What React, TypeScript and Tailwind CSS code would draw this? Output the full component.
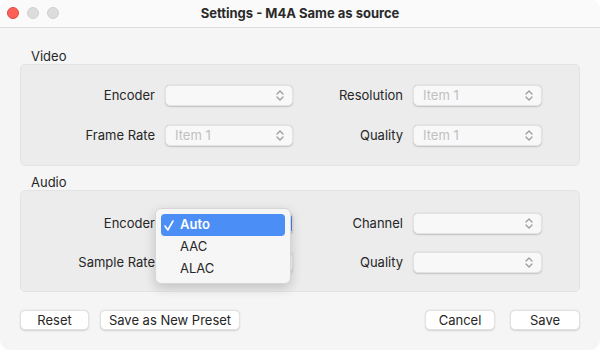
import React from "react";

const Chevrons = () => (
  <svg width="8" height="11" viewBox="0 0 8 11" fill="none" stroke="#9a9a9a" strokeWidth="1.2" strokeLinecap="round" strokeLinejoin="round">
    <path d="M1 4 L4 1 L7 4" />
    <path d="M1 7 L4 10 L7 7" />
  </svg>
);

const Popup = ({ text, w, blue }: { text?: string; w: string; blue?: boolean }) => (
  <div
    className={`${w} h-[21px] rounded-[5px] flex items-center justify-between pl-[9px] pr-[8px] shadow-[0_0.5px_1.5px_rgba(0,0,0,0.18)] border border-[#e2e2e2] ${
      blue ? "bg-[#3b7ff0]" : "bg-[#f8f8f8]"
    }`}
  >
    <span className="text-[13px] text-[#c0c0c0] leading-none">{text ?? ""}</span>
    <Chevrons />
  </div>
);

const Row = ({
  l1,
  l2,
  p1,
  p2,
  children,
}: {
  l1: string;
  l2: string;
  p1: React.ReactNode;
  p2: React.ReactNode;
  children?: React.ReactNode;
}) => (
  <div className="flex items-center h-[21px]">
    <div className="w-[134px] text-right text-[13px] text-[#262626]">{l1}</div>
    <div className="ml-[10px] relative">
      {p1}
      {children}
    </div>
    <div className="w-[110px] text-right text-[13px] text-[#262626]">{l2}</div>
    <div className="ml-[10px]">{p2}</div>
  </div>
);

export default function App() {
  return (
    <div
      className="w-[600px] h-[350px] bg-[#f5f5f5] flex flex-col overflow-hidden rounded-[10px]"
      style={{ fontFamily: "Inter, 'Noto Sans', sans-serif" }}
    >
      <div className="h-[28px] shrink-0 bg-[#fafafa] border-b border-[#dedede] relative flex items-center justify-center">
        <div className="absolute left-[7px] top-[7px] flex gap-[8px]">
          <div className="w-[12px] h-[12px] rounded-full bg-[#fe5f57] border border-[#e14942]" />
          <div className="w-[12px] h-[12px] rounded-full bg-[#dcdcdc] border border-[#d0d0d0]" />
          <div className="w-[12px] h-[12px] rounded-full bg-[#dcdcdc] border border-[#d0d0d0]" />
        </div>
        <span className="text-[13px] font-bold text-[#2a2a2a]">Settings - M4A Same as source</span>
      </div>

      <div className="flex flex-col px-[20px] pt-[20px]">
        <div className="h-[16px] pl-[11px] text-[13px] leading-[16px] text-[#262626]">Video</div>
        <div className="h-[102px] rounded-[5px] bg-[#ececec] border border-[#e4e4e4] pt-[20px] flex flex-col gap-[19px]">
          <Row l1="Encoder" l2="Resolution" p1={<Popup w="w-[128px]" />} p2={<Popup w="w-[129px]" text="Item 1" />} />
          <Row l1="Frame Rate" l2="Quality" p1={<Popup w="w-[128px]" text="Item 1" />} p2={<Popup w="w-[129px]" text="Item 1" />} />
        </div>

        <div className="h-[16px] mt-[8px] pl-[11px] text-[13px] leading-[16px] text-[#262626]">Audio</div>
        <div className="h-[102px] rounded-[5px] bg-[#ececec] border border-[#e4e4e4] pt-[22px] flex flex-col gap-[18px]">
          <Row l1="Encoder" l2="Channel" p1={<Popup w="w-[128px]" blue />} p2={<Popup w="w-[129px]" />}>
            <div className="absolute left-[-10px] top-[-5px] w-[136px] h-[76px] rounded-[6px] bg-[#f6f6f6] border border-[#d6d6d6] shadow-[0_4px_12px_rgba(0,0,0,0.18)] p-[5px] z-10">
              <div className="h-[22px] rounded-[4px] bg-[#4b8ef5] flex items-center text-white text-[13px]">
                <span className="w-[19px] pl-[3px] flex items-center">
                  <svg width="10" height="11" viewBox="0 0 10 11" fill="none" stroke="white" strokeWidth="1.6" strokeLinecap="round" strokeLinejoin="round">
                    <path d="M1 6 L3.8 10 L9 1" />
                  </svg>
                </span>
                <span className="font-semibold">Auto</span>
              </div>
              <div className="h-[22px] flex items-center pl-[19px] text-[13px] text-[#262626]">AAC</div>
              <div className="h-[22px] flex items-center pl-[19px] text-[13px] text-[#262626]">ALAC</div>
            </div>
          </Row>
          <Row l1="Sample Rate" l2="Quality" p1={<Popup w="w-[128px]" />} p2={<Popup w="w-[129px]" />} />
        </div>

        <div className="mt-[18px] flex items-center h-[20px]">
          <button className="w-[69px] h-[20px] rounded-[5px] bg-white border border-[#e2e2e2] shadow-[0_0.5px_1.5px_rgba(0,0,0,0.15)] text-[13px] text-[#262626] leading-none">Reset</button>
          <button className="ml-[11px] w-[140px] h-[20px] rounded-[5px] bg-white border border-[#e2e2e2] shadow-[0_0.5px_1.5px_rgba(0,0,0,0.15)] text-[13px] text-[#262626] leading-none">Save as New Preset</button>
          <div className="flex-1" />
          <button className="w-[70px] h-[20px] rounded-[5px] bg-white border border-[#e2e2e2] shadow-[0_0.5px_1.5px_rgba(0,0,0,0.15)] text-[13px] text-[#262626] leading-none">Cancel</button>
          <button className="ml-[15px] w-[70px] h-[20px] rounded-[5px] bg-white border border-[#e2e2e2] shadow-[0_0.5px_1.5px_rgba(0,0,0,0.15)] text-[13px] text-[#262626] leading-none">Save</button>
        </div>
      </div>
    </div>
  );
}
